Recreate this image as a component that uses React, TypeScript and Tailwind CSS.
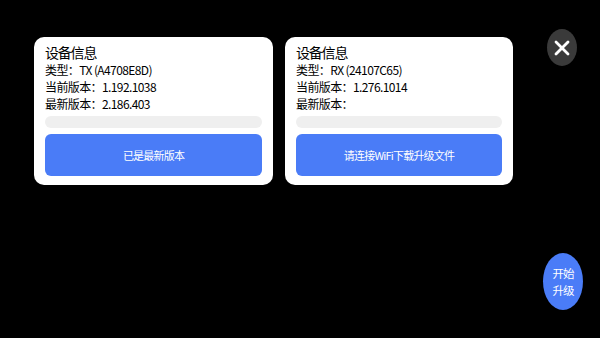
import { X } from "lucide-react";

type DeviceCardProps = {
  width: string;
  type: string;
  current: string;
  latest: string;
  action: string;
};

const DeviceCard = ({ width, type, current, latest, action }: DeviceCardProps) => (
  <div className={`${width} flex flex-col rounded-[10px] bg-white px-[11px] pt-[6px] pb-[9px] text-black`}>
    <div className="text-[14px] leading-[18px] tracking-[-1.2px]">设备信息</div>
    <div className="text-[12px] leading-[17px] tracking-[-0.6px]">类型：{type}</div>
    <div className="text-[12px] leading-[17px] tracking-[-0.6px]">当前版本：{current}</div>
    <div className="text-[12px] leading-[17px] tracking-[-0.6px]">最新版本：{latest}</div>
    <div className="mt-[4px] h-[12px] w-full rounded-full bg-[#efefef]" />
    <button className="mt-[6px] flex h-[42px] w-full items-center justify-center rounded-[6px] bg-[#4a7cf7] text-[11px] tracking-[-0.8px] text-white">
      {action}
    </button>
  </div>
);

export default function App() {
  return (
    <div
      className="relative h-[338px] w-[600px] overflow-hidden bg-black"
      style={{ fontFamily: '"Noto Sans CJK SC", "Noto Sans", sans-serif' }}
    >
      <div className="flex gap-[12px] pt-[37px] pl-[34px]">
        <DeviceCard
          width="w-[239px]"
          type="TX (A4708E8D)"
          current="1.192.1038"
          latest="2.186.403"
          action="已是最新版本"
        />
        <DeviceCard
          width="w-[228px]"
          type="RX (24107C65)"
          current="1.276.1014"
          latest=""
          action="请连接WiFi下载升级文件"
        />
      </div>

      {/* close */}
      <button className="absolute top-[29px] left-[547px] flex h-[37px] w-[30px] items-center justify-center rounded-[50%] bg-[#3a3a3a] text-white">
        <X size={24} strokeWidth={2.8} />
      </button>

      {/* start upgrade */}
      <button className="absolute top-[253px] left-[543px] flex h-[57px] w-[40px] flex-col items-center justify-center rounded-[50%] bg-[#4a7cf7] text-[11.5px] leading-[17px] tracking-[-1px] text-white">
        <span>开始</span>
        <span>升级</span>
      </button>
    </div>
  );
}
